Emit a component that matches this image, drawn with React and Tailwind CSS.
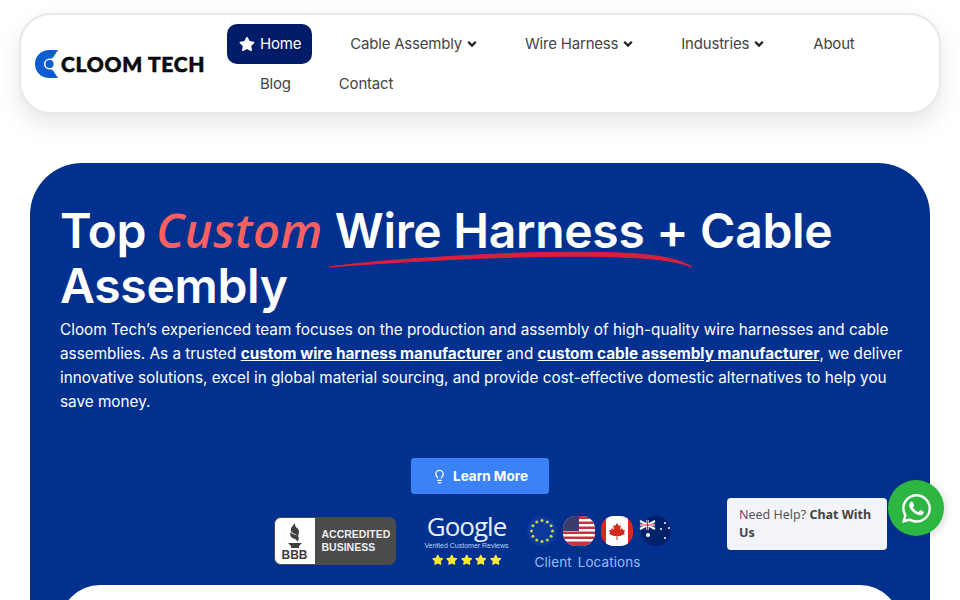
import { Lightbulb } from 'lucide-react'
import { FaStar, FaWhatsapp } from 'react-icons/fa'

function Caret() {
  return (
    <svg width="10" height="8" viewBox="0 0 10 8" className="shrink-0">
      <polyline points="1.200,1.800 5,5.600 8.800,1.800" fill="none" stroke="#222" strokeWidth="2.300" />
    </svg>
  )
}

function NavItem({ label, caret, className = '' }) {
  return (
    <a className={`flex h-10 items-center gap-[5px] px-3 text-[15px] tracking-[-0.2px] text-[#444] ${className}`}>
      {label}
      {caret && <Caret />}
    </a>
  )
}

function Header() {
  return (
    <header className="flex h-[101px] rounded-[32px] border-2 border-[#e8e8e8] bg-white shadow-[0_10px_24px_rgba(0,0,0,0.1)]">
      {/* Logo */}
      <div className="flex w-[206px] items-center pl-[14px]">
        <svg width="26" height="30" viewBox="0 0 26 30" className="shrink-0">
          <path d="M23 1 H15 C6 1 0 7 0 15 C0 23 6 29 15 29 H23 L19 23 C18 21 17 20.500 15 20.500 C11.500 20.500 9 18 9 15 C9 12 11.500 9.500 15 9.500 C17 9.500 18 9 19 7 Z" fill="#0b5ccf" />
          <circle cx="14.500" cy="15" r="4" fill="#0b5ccf" />
        </svg>
        <span className="whitespace-nowrap font-['Lato',sans-serif] text-[21px] font-black leading-none tracking-[0.7px] text-[#0a0a0a] [-webkit-text-stroke:0.6px_#0a0a0a]">CLOOM TECH</span>
      </div>
      {/* Nav */}
      <nav className="flex w-[700px] flex-wrap content-start pt-[9px]">
        <a className="mr-[26px] flex h-10 items-center gap-[5px] rounded-[10px] bg-[#001c68] pl-3 pr-[11px] text-[15px] tracking-[-0.2px] text-white">
          <FaStar size={16} />
          Home
        </a>
        <NavItem label="Cable Assembly" caret className="mr-[24px]" />
        <NavItem label="Wire Harness" caret className="mr-[24px]" />
        <NavItem label="Industries" caret className="mr-[25px]" />
        <NavItem label="About" className="mr-[20px]" />
        <NavItem label="Blog" className="ml-[21px] mr-[24px]" />
        <NavItem label="Contact" />
      </nav>
    </header>
  )
}

function Bbb() {
  return (
    <div className="flex h-12 w-[122px] overflow-hidden rounded-[7px] bg-[#4b4b4b]">
      <div className="flex w-[42px] flex-col items-center justify-end rounded-l-[7px] border border-[#4b4b4b] bg-white pb-[2px]">
        <svg width="16" height="26" viewBox="0 0 16 26">
          <path d="M8 0 C6 3 3 5 4 8 C5 11 11 11 11 14 C12 10 13 7 10 5 C8 4 8 2 8 0 Z M4 9 C2 12 4 15 8 16 C10 17 10 18 10 19 C13 16 12 13 9 12 C6 11 5 11 4 9 Z M1 20 H15 L12 23 V25 H4 V23 Z" fill="#3f3f3f" />
        </svg>
        <span className="font-['Liberation_Sans',sans-serif] text-[12px] font-bold leading-[13px] text-[#3f3f3f]">BBB</span>
      </div>
      <div className="flex flex-col justify-center pl-[6px] font-['Liberation_Sans',sans-serif] text-[10.500px] font-bold leading-[13px] text-[#eee]">
        <span>ACCREDITED</span>
        <span>BUSINESS</span>
      </div>
    </div>
  )
}

function GoogleBadge() {
  return (
    <div className="flex w-[84px] flex-col items-center">
      <span className="font-['Open_Sans',sans-serif] text-[26px] font-medium leading-[28px] tracking-[-1px] text-[#e8eefc]">Google</span>
      <span className="mt-[1px] whitespace-nowrap font-['Liberation_Sans',sans-serif] text-[7px] leading-[10px] text-[#bcd0f5]">Verified Customer Reviews</span>
      <div className="mt-[3px] flex gap-[3px] text-[#ffe936]">
        <FaStar size={11.500} />
        <FaStar size={11.500} />
        <FaStar size={11.500} />
        <FaStar size={11.500} />
        <FaStar size={11.500} />
      </div>
    </div>
  )
}

function Flags() {
  const euStars = Array.from({ length: 12 }, (_, i) => {
    const a = (i * Math.PI) / 6
    return [15 + 10.500 * Math.cos(a), 15 + 10.500 * Math.sin(a)]
  })
  return (
    <div className="flex w-[146px] flex-col items-start">
      <div className="flex gap-[6px]">
        {/* EU */}
        <svg width="30" height="30" viewBox="0 0 30 30">
          <circle cx="15" cy="15" r="15" fill="#0b3a9c" />
          {euStars.map(([x, y], i) => (
            <circle key={i} cx={x} cy={y} r="1.500" fill="#cfd63a" />
          ))}
        </svg>
        {/* US */}
        <svg width="32" height="30" viewBox="0 0 32 30">
          <defs>
            <clipPath id="us">
              <rect width="32" height="30" rx="13" />
            </clipPath>
          </defs>
          <g clipPath="url(#us)">
            <rect width="32" height="30" fill="#fff" />
            <rect y="0" width="32" height="3" fill="#c8313e" />
            <rect y="5.500" width="32" height="2.500" fill="#c8313e" />
            <rect y="10.500" width="32" height="2.500" fill="#c8313e" />
            <rect y="15.500" width="32" height="2.500" fill="#c8313e" />
            <rect y="20.500" width="32" height="2.500" fill="#c8313e" />
            <rect y="25.500" width="32" height="4.500" fill="#c8313e" />
            <rect width="16" height="15" fill="#3c3b6e" />
          </g>
        </svg>
        {/* Canada */}
        <svg width="32" height="30" viewBox="0 0 32 30">
          <defs>
            <clipPath id="ca">
              <rect width="32" height="30" rx="13" />
            </clipPath>
          </defs>
          <g clipPath="url(#ca)">
            <rect width="32" height="30" fill="#d52b1e" />
            <rect x="5" width="22" height="30" rx="3" fill="#fff" />
            <path d="M16 7 L18 10 L20 9 L19 14 L21 12 L22 14 L24 14 L23 17 L24 18 L19 20 L16.500 20 V24 H15.500 V20 L13 20 L8 18 L9 17 L8 14 L10 14 L11 12 L13 14 L12 9 L14 10 Z" fill="#d52b1e" />
          </g>
        </svg>
        {/* Australia */}
        <svg width="34" height="30" viewBox="0 0 34 30">
          <circle cx="17" cy="15" r="15" fill="#012169" />
          <path d="M1 5 L16 13 M1 13 L16 5" stroke="#fff" strokeWidth="2" />
          <path d="M8.500 4 V14 M1 9 H16" stroke="#fff" strokeWidth="2.400" />
          <path d="M8.500 4 V14 M1 9 H16" stroke="#d3233a" strokeWidth="1.200" />
          <circle cx="9" cy="19" r="2" fill="#fff" />
          <circle cx="26" cy="7" r="1" fill="#fff" />
          <circle cx="26" cy="22" r="1" fill="#fff" />
          <circle cx="22" cy="13" r="1" fill="#fff" />
          <circle cx="30" cy="12" r="1" fill="#fff" />
        </svg>
      </div>
      <span className="ml-[8px] mt-[8px] whitespace-nowrap text-[13.500px] leading-[16px] tracking-[0.1px] text-[#93bdf5] [word-spacing:2px]">Client Locations</span>
    </div>
  )
}

function Hero() {
  return (
    <section className="mx-[11px] mt-[49px] rounded-t-[52px] bg-[#01308f] px-[30px] pt-[40px] text-white">
      <h1 className="relative text-[48px] font-semibold leading-[55px] tracking-[-0.3px]">
        Top <span className="-ml-[2px] font-['Open_Sans',sans-serif] text-[47px] font-semibold italic leading-none tracking-[0.6px] text-[#fb6060]">Custom</span> Wire Harness + Cable Assembly
        <svg width="370" height="22" viewBox="0 0 370 22" className="absolute left-[268px] top-[46px]">
          <path d="M2 18 C40 12 120 7 192 4 C230 3 270 3 292 4 C320 5 348 8 364 18 C345 11 320 9 292 8 C270 7 230 7 192 8 C120 10 40 15 2 18 Z" fill="#d8203c" stroke="#d8203c" strokeWidth="1" />
        </svg>
      </h1>
      <p className="-mr-[6px] mt-[5px] text-[15.300px] leading-6">
        Cloom Tech’s experienced team focuses on the production and assembly of high-quality wire harnesses and cable assemblies. As a trusted <a className="font-bold underline">custom wire harness manufacturer</a> and <a className="font-bold underline">custom cable assembly manufacturer</a>, we deliver innovative solutions, excel in global material sourcing, and provide cost-effective domestic alternatives to help you save money.
      </p>
      <div className="mt-[44px] flex justify-center">
        <a className="flex h-9 w-[138px] items-center justify-center gap-[6px] rounded-[3px] bg-[#3b82f6] text-[13.500px] font-bold">
          <Lightbulb size={15} />
          Learn More
        </a>
      </div>
      <div className="mt-[18px] flex items-start justify-center pr-[14px]">
        <div className="mt-[5px] mr-[29px]"><Bbb /></div>
        <div className="mr-[18px]"><GoogleBadge /></div>
        <div className="mt-[4px]"><Flags /></div>
      </div>
      <div className="mt-[15px] h-[40px] rounded-t-[40px] bg-white" />
    </section>
  )
}

export default function App() {
  return (
    <div className="relative h-[600px] overflow-hidden bg-white px-[19px] pt-[13px] font-['Inter','Noto_Sans',sans-serif]">
      <Header />
      <Hero />
      {/* Chat widget */}
      <div className="absolute left-[727px] top-[498px] h-[52px] w-[160px] rounded-[4px] bg-[#f3f4f8] px-3 py-[8px] font-['Noto_Sans',sans-serif] text-[12.500px] leading-[18px] text-[#555]">
        Need Help? <b className="text-[#444]">Chat With Us</b>
      </div>
      <div className="absolute left-[888px] top-[480px] flex h-14 w-14 items-center justify-center rounded-full bg-[#2db742] text-white shadow-[2px_2px_8px_rgba(0,0,0,0.15)]">
        <FaWhatsapp size={33} />
      </div>
    </div>
  )
}
